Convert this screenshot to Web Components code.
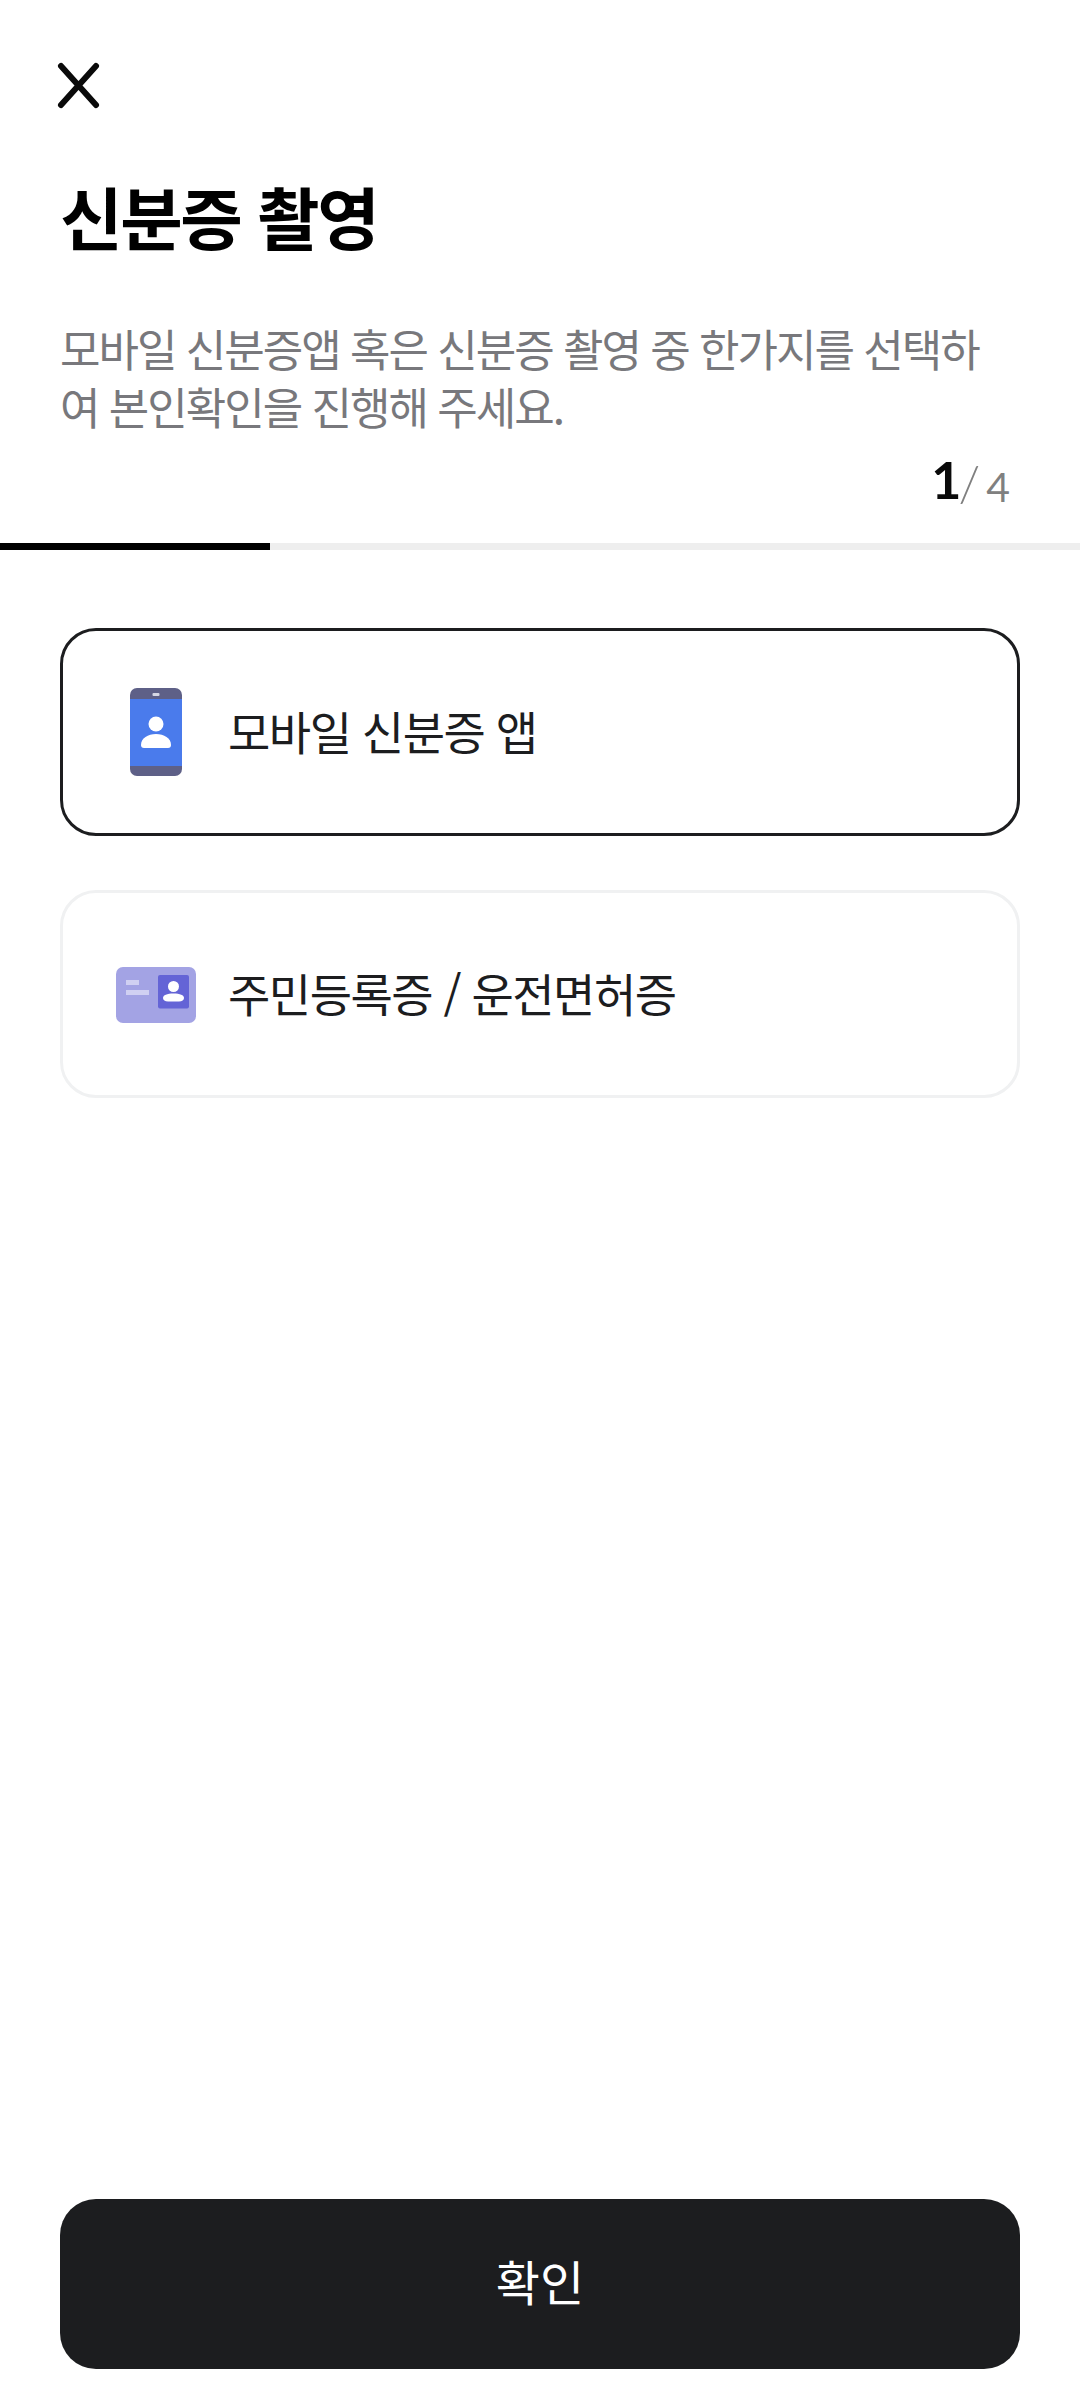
<!DOCTYPE html>
<html lang="ko">
<head>
<meta charset="utf-8">
<title>신분증 촬영</title>
<style>
    html, body { margin: 0; padding: 0; background: #fff; }
    body { font-family: "Noto Sans CJK KR", "Noto Sans", sans-serif; }
</style>
</head>
<body>
<id-screen>
    <id-header slot="header" heading="신분증 촬영" step="1" total="4">모바일 신분증앱 혹은 신분증 촬영 중 한가지를 선택하여 본인확인을 진행해 주세요.</id-header>
    <id-option selected>
        <svg slot="icon" width="52" height="88" viewBox="0 0 52 88">
            <rect width="52" height="88" rx="7" fill="#5e6087"/>
            <rect y="11" width="52" height="67" fill="#4a7bec"/>
            <rect x="22.500" y="5" width="7" height="3" rx="1" fill="#d5d7e4"/>
            <circle cx="26" cy="36" r="7.500" fill="#fff"/>
            <path d="M11 57 C11 50 18 46 26 46 C34 46 41 50 41 57 C41 59 40 60 38 60 L14 60 C12 60 11 59 11 57 Z" fill="#fff"/>
        </svg>
        모바일 신분증 앱
    </id-option>
    <id-option>
        <svg slot="icon" style="margin-top: 2px" width="80" height="56" viewBox="0 0 80 56">
            <rect width="80" height="56" rx="7" fill="#a3a3e4"/>
            <rect x="10" y="13" width="13" height="5" fill="#d0d0f2"/>
            <rect x="10" y="23" width="23" height="5" fill="#d0d0f2"/>
            <rect x="42" y="8" width="31" height="33.500" rx="2" fill="#6464d6"/>
            <circle cx="57.500" cy="19.500" r="5.500" fill="#fff"/>
            <path d="M47 31 C47 28 51 26.500 57.500 26.500 C64 26.500 68 28 68 31 C68 33 66 34.500 63 34.500 L52 34.500 C49 34.500 47 33 47 31 Z" fill="#fff"/>
        </svg>
        주민등록증 / 운전면허증
    </id-option>
    <id-button slot="footer">확인</id-button>
</id-screen>

<script>
class IdScreen extends HTMLElement {
    constructor() {
        super();
        this.attachShadow({ mode: 'open' });
        this.shadowRoot.innerHTML = `
            <style>
                :host {
                    display: flex;
                    flex-direction: column;
                    height: 2402px;
                    box-sizing: border-box;
                    padding-bottom: 33px;
                    background: #fff;
                }
                .options {
                    flex: 1;
                    display: flex;
                    flex-direction: column;
                    gap: 54px;
                    padding: 78px 60px 0;
                }
                .footer {
                    padding: 0 60px;
                }
            </style>
            <slot name="header"></slot>
            <div class="options"><slot></slot></div>
            <div class="footer"><slot name="footer"></slot></div>
        `;
    }
}

class IdHeader extends HTMLElement {
    constructor() {
        super();
        this.attachShadow({ mode: 'open' });
        this.shadowRoot.innerHTML = `
            <style>
                :host {
                    display: block;
                }
                .close {
                    display: block;
                    margin: 0;
                    padding: 60px 0 0 56px;
                    height: 52px;
                }
                h1 {
                    margin: 56px 60px 0;
                    font-size: 68px;
                    letter-spacing: -2.400px;
                    line-height: 96px;
                    font-weight: 700;
                    color: #000;
                }
                p {
                    margin: 55px 80px 0 60px;
                    font-size: 44px;
                    letter-spacing: -2px;
                    line-height: 58px;
                    font-weight: 400;
                    color: #78787c;
                    word-break: break-all;
                }
                .count {
                    height: 60px;
                    margin-top: 14px;
                    padding-right: 70px;
                    text-align: right;
                    font-family: Lato, sans-serif;
                    color: #808080;
                    line-height: 60px;
                }
                .count b {
                    font-size: 52px;
                    font-weight: 700;
                    color: #0a0a0a;
                    margin-right: -3px;
                    vertical-align: 3px;
                }
                .slash {
                    font-size: 50px;
                    font-weight: 300;
                    margin-right: 6px;
                }
                .total {
                    font-size: 41px;
                    font-weight: 400;
                }
                .track {
                    margin-top: 34px;
                    height: 7px;
                    background: #eeeeee;
                }
                .bar {
                    height: 100%;
                    background: #000;
                }
            </style>
            <svg class="close" width="52" height="52" viewBox="0 0 52 52">
                <path d="M5 6 L40 45 M40 6 L5 45" stroke="#0a0a0a" stroke-width="6" stroke-linecap="round" fill="none"/>
            </svg>
            <h1></h1>
            <p><slot></slot></p>
            <div class="count"><b></b><span class="slash">/</span><span class="total"></span></div>
            <div class="track"><div class="bar"></div></div>
        `;
    }

    connectedCallback() {
        const step = Number(this.getAttribute('step'));
        const total = Number(this.getAttribute('total'));
        this.shadowRoot.querySelector('h1').textContent = this.getAttribute('heading');
        this.shadowRoot.querySelector('b').textContent = step;
        this.shadowRoot.querySelector('.total').textContent = total;
        this.shadowRoot.querySelector('.bar').style.width = (step / total * 100) + '%';
    }
}

class IdOption extends HTMLElement {
    constructor() {
        super();
        this.attachShadow({ mode: 'open' });
        this.shadowRoot.innerHTML = `
            <style>
                :host {
                    display: flex;
                    align-items: center;
                    height: 208px;
                    box-sizing: border-box;
                    border: 3px solid #f0f1f2;
                    border-radius: 36px;
                    font-size: 46px;
                    letter-spacing: -1.500px;
                    font-weight: 400;
                    color: #1c1d1f;
                    background: #fff;
                }
                :host([selected]) {
                    border-color: #1c1d1f;
                }
                .icon {
                    flex: none;
                    width: 80px;
                    margin: 0 32px 0 53px;
                    display: flex;
                    justify-content: center;
                }
                .label {
                    padding-bottom: 4px;
                }
            </style>
            <div class="icon"><slot name="icon"></slot></div>
            <div class="label"><slot></slot></div>
        `;
    }
}

class IdButton extends HTMLElement {
    constructor() {
        super();
        this.attachShadow({ mode: 'open' });
        this.shadowRoot.innerHTML = `
            <style>
                :host {
                    display: flex;
                    align-items: center;
                    justify-content: center;
                    height: 170px;
                    box-sizing: border-box;
                    padding-bottom: 8px;
                    border-radius: 36px;
                    background: #1c1d1f;
                    color: #fff;
                    font-size: 48px;
                    font-weight: 400;
                }
            </style>
            <slot></slot>
        `;
    }
}

customElements.define('id-screen', IdScreen);
customElements.define('id-header', IdHeader);
customElements.define('id-option', IdOption);
customElements.define('id-button', IdButton);
</script>
</body>
</html>
